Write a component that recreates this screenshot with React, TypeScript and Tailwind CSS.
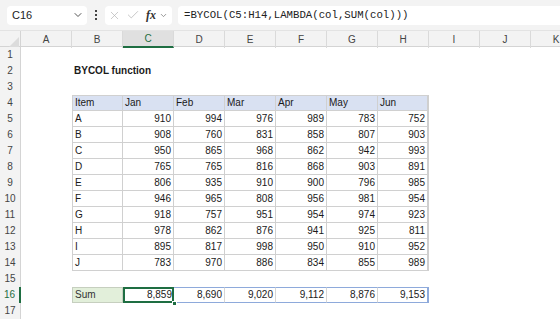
import { ChevronDown, X, Check } from 'lucide-react'

const cols = ['A', 'B', 'C', 'D', 'E', 'F', 'G', 'H', 'I', 'J', 'K']

const data: [string, number[]][] = [
  ['A', [910, 994, 976, 989, 783, 752]],
  ['B', [908, 760, 831, 858, 807, 903]],
  ['C', [950, 865, 968, 862, 942, 993]],
  ['D', [765, 765, 816, 868, 903, 891]],
  ['E', [806, 935, 910, 900, 796, 985]],
  ['F', [946, 965, 808, 956, 981, 954]],
  ['G', [918, 757, 951, 954, 974, 923]],
  ['H', [978, 862, 876, 941, 925, 811]],
  ['I', [895, 817, 998, 950, 910, 952]],
  ['J', [783, 970, 886, 834, 855, 989]],
]

const months = ['Jan', 'Feb', 'Mar', 'Apr', 'May', 'Jun']
const sums = ['8,859', '8,690', '9,020', '9,112', '8,876', '9,153']

function Cell({ row, col }: { row: number; col: number }) {
  // col index: 0 = A
  const base = 'h-4 text-[10px] leading-4 whitespace-nowrap px-[2px] text-[#1a1a1a]'
  if (row === 2 && col === 1)
    return <div className={`${base} font-bold overflow-visible relative z-10`}>BYCOL function</div>

  if (row >= 4 && row <= 14 && col >= 1 && col <= 7) {
    const edges = `border-r border-b border-[#d0d0d0] ${col === 1 ? 'border-l' : ''} ${row === 4 ? 'border-t' : ''} ${col === 7 ? 'border-r-2 border-r-[#cfcfcf]' : ''}`
    if (row === 4)
      return <div className={`${base} ${edges} bg-[#d9e1f2] border-[#c3cad8] leading-[14px]`}>{col === 1 ? 'Item' : months[col - 2]}</div>
    const [item, vals] = data[row - 5]
    if (col === 1) return <div className={`${base} ${edges} leading-[15px]`}>{item}</div>
    return <div className={`${base} ${edges} leading-[15px] text-right`}>{vals[col - 2]}</div>
  }

  if (row === 16 && col === 1)
    return <div className={`${base} border border-[#c6cfbf] bg-[#e2efda] leading-[14px] text-[#333]`}>Sum</div>

  if (row === 16 && col >= 2 && col <= 7) {
    const edges = `border-t border-b border-[#8eaadb] border-r ${col === 7 ? 'border-r-[#8eaadb] border-r-2' : 'border-r-[#d6d6d6]'}`
    if (col === 2)
      return (
        <div className={`${base} relative text-right leading-[15px]`}>
          {sums[0]}
          <div className="absolute inset-0 border-2 border-[#1e6e42]" />
          <div className="absolute right-[-3px] bottom-[-3px] w-[5px] h-[5px] bg-[#1e6e42] border border-white" />
        </div>
      )
    return <div className={`${base} ${edges} text-right leading-[14px]`}>{sums[col - 2]}</div>
  }

  return <div className={base} />
}

export default function App() {
  const rows = Array.from({ length: 17 }, (_, i) => i + 1)
  return (
    <div className="w-[560px] h-[320px] overflow-hidden bg-white font-['Liberation_Sans',sans-serif]">
      {/* formula bar */}
      <div className="h-[31px] bg-[#f3f3f3] flex items-center pl-[7px] gap-[6px] border-b border-[#e3e3e3]">
        <div className="w-[80px] h-[19px] bg-white rounded-[4px] flex items-center justify-between pl-[5px] pr-[3px] text-[11px] text-[#222]">
          <span>C16</span>
          <ChevronDown className="w-3 h-3 text-[#555]" strokeWidth={2} />
        </div>
        <div className="flex flex-col gap-[2px] mx-[2px]">
          <span className="w-[2px] h-[2px] bg-[#444]" />
          <span className="w-[2px] h-[2px] bg-[#444]" />
          <span className="w-[2px] h-[2px] bg-[#444]" />
        </div>
        <div className="w-[67px] h-[19px] bg-white rounded-[4px] flex items-center pl-[3px] gap-[3px] text-[#b5b5b5]">
          <X className="w-[13px] h-[13px]" strokeWidth={1.3} />
          <Check className="w-[14px] h-[14px] ml-[2px]" strokeWidth={1.3} />
          <span className="ml-[3px] text-[12px] italic font-['Liberation_Serif',serif] text-[#333] font-bold">fx</span>
          <ChevronDown className="w-[9px] h-[9px] text-[#777]" strokeWidth={2} />
        </div>
        <div className="flex-1 h-[19px] bg-white rounded-l-[4px] flex items-center pl-[6px] text-[10.7px] font-['Liberation_Mono',monospace] text-[#222]">
          =BYCOL(C5:H14,LAMBDA(col,SUM(col)))
        </div>
      </div>

      {/* column headers */}
      <div className="grid grid-cols-[21px_repeat(11,51px)] h-4 bg-[#f3f3f3] border-b border-[#d4d4d4] text-[10px] text-[#444]">
        <div className="border-r border-[#d4d4d4] flex items-end justify-end pr-[1px] pb-[1px]">
          <div className="w-0 h-0 border-l-[10px] border-l-transparent border-b-[10px] border-b-[#dcdcdc]" />
        </div>
        {cols.map(c => (
          <div
            key={c}
            className={`flex items-center justify-center border-r border-[#dadada] ${c === 'C' ? 'bg-[#e0e0e0] border-b-2 border-b-[#1e6e42] text-[#1e6e42]' : ''}`}
          >
            {c}
          </div>
        ))}
      </div>

      {/* rows */}
      {rows.map(r => (
        <div key={r} className="grid grid-cols-[21px_repeat(11,51px)] h-4">
          <div
            className={`text-[10px] leading-4 text-center bg-[#f3f3f3] border-r border-[#d4d4d4] ${r === 16 ? 'bg-[#e0e0e0] text-[#1e6e42] border-r-2 border-r-[#1e6e42]' : 'text-[#444]'}`}
          >
            {r}
          </div>
          {cols.map((_, ci) => (
            <Cell key={ci} row={r} col={ci} />
          ))}
        </div>
      ))}
    </div>
  )
}
